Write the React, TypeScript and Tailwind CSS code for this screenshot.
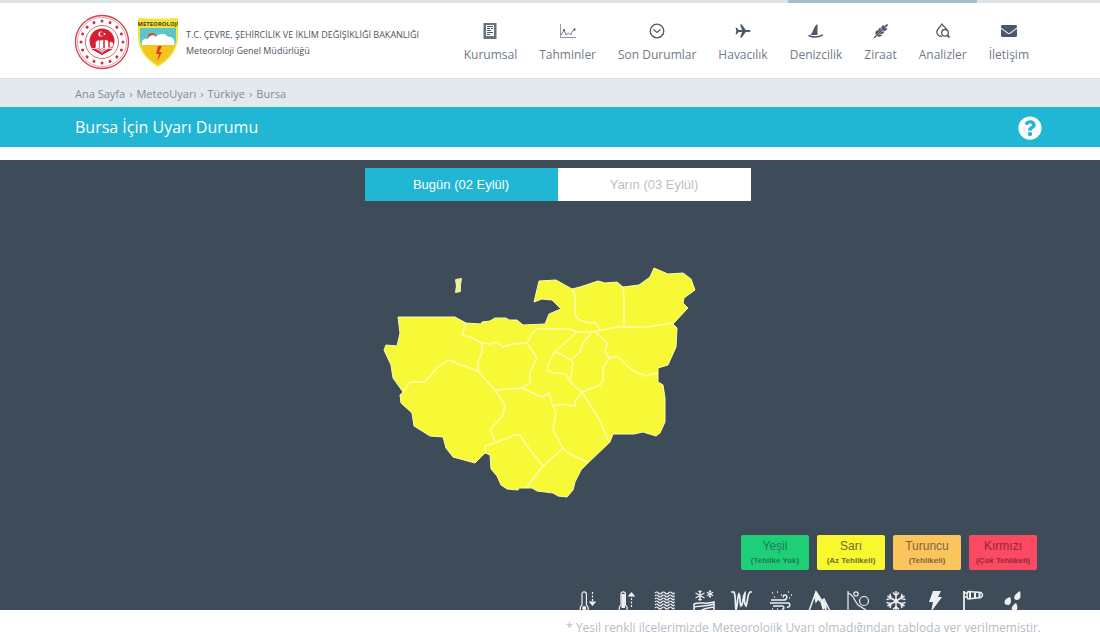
import type { ReactNode } from "react";
import { FaEnvelope, FaQuestionCircle } from "react-icons/fa";

const NAV: { label: string; icon: ReactNode }[] = [
  {
    label: "Kurumsal",
    icon: (
      <svg viewBox="0 0 16 16" className="h-4 w-4">
        <path fill="currentColor" fillRule="evenodd" opacity=".85" d="M1.500 0h13v16h-13zM4 2v11h8V2z" />
        <path fill="none" stroke="currentColor" d="M5 3.500h6M5 5.500h3M9 5.500h2M5 7.500h4M5 9.500h6M5 11.500h3" />
      </svg>
    ),
  },
  {
    label: "Tahminler",
    icon: (
      <svg viewBox="0 0 16 16" className="h-4 w-4" fill="none" stroke="currentColor" strokeWidth="1">
        <path d="M.5 1v13.500H16" opacity=".6" />
        <path d="M1 12l3-5 2 5 2.500-2 2 2 2-4 3-2" opacity=".8" />
        <circle cx="4" cy="7" r=".7" />
        <circle cx="14.500" cy="6.500" r=".7" />
      </svg>
    ),
  },
  {
    label: "Son Durumlar",
    icon: (
      <svg viewBox="0 0 16 16" className="h-4 w-4" fill="none" stroke="currentColor" strokeWidth="1.300">
        <circle cx="8" cy="8" r="6.800" />
        <path d="M4.500 6.500 8 9.500l3.500-3" />
      </svg>
    ),
  },
  {
    label: "Havacılık",
    icon: (
      <svg viewBox="0 0 16 16" className="h-4 w-4" fill="currentColor">
        <path d="M.5 4.800h1.300l1.900 2.300h3.400L5 1.500h1.800l4 5.600H14c1 0 1.700.5 1.700.9s-.7.9-1.700.9h-3.200l-4 5.600H5l2.100-5.600H3.700l-1.900 2.300H.5L1.300 8z" />
      </svg>
    ),
  },
  {
    label: "Denizcilik",
    icon: (
      <svg viewBox="0 0 16 16" className="h-4 w-4" fill="currentColor">
        <path d="M9.500 1v11H2.500C5.500 9 5.500 3.500 9.500 1z" />
        <path d="M.5 12.500c4 1.800 10 1.700 14.500-.7" fill="none" stroke="currentColor" strokeWidth="1.400" />
      </svg>
    ),
  },
  {
    label: "Ziraat",
    icon: (
      <svg viewBox="0 0 16 16" className="h-4 w-4" fill="currentColor">
        <path d="M1 15 12 4" stroke="currentColor" strokeWidth="1.200" />
        <path d="M3 12C1.500 9 3 8 4.500 7 6 9 5.500 10.500 3 12zM5.500 9.500C4.500 7 5.500 5.500 7.500 4.500 8.500 6.500 8 8 5.500 9.500zM8.500 6.500C7.500 4 9 2.500 11 2c.8 2 0 3.500-2.500 4.500zM4 13c2.500 1.500 4 .5 5-1-2-1.500-3.500-1-5 1zM6.500 10.500c2.500 1 4 0 5-1.800-2-1-3.500-.7-5 1.800zM9.500 7.500c2.500 1 4 0 4.800-2-2-.8-3.700-.5-4.800 2zM11.500 4.500c0-2 1-3 3.500-3.500-.3 2.500-1.300 3.500-3.500 3.500z" />
      </svg>
    ),
  },
  {
    label: "Analizler",
    icon: (
      <svg viewBox="0 0 16 16" className="h-4 w-4" fill="none" stroke="currentColor" strokeWidth="1.300">
        <path d="M7 13.300C4 13.500 1.800 11.500 1.800 9 1.800 6 5 4 7 1.200 8.700 3.500 11 5 12 7" />
        <circle cx="10" cy="9.800" r="3.300" />
        <path d="m12.300 12.200 2.200 2.500" strokeWidth="1.800" />
      </svg>
    ),
  },
  { label: "İletişim", icon: <FaEnvelope className="h-4 w-4" /> },
];

const LEVELS = [
  { name: "Yeşil", note: "(Tehlike Yok)", color: "bg-[#1fcf78] text-[#1b7a55]" },
  { name: "Sarı", note: "(Az Tehlikeli)", color: "bg-[#f9f82f] text-[#6d6c2e]" },
  { name: "Turuncu", note: "(Tehlikeli)", color: "bg-[#fcc45c] text-[#7c6640]" },
  { name: "Kırmızı", note: "(Çok Tehlikeli)", color: "bg-[#fb4a61] text-[#93283b]" },
];

const FLAKE = "M0-5V5M-4.500-2.500l9 5M-4.500 2.500l9-5M-1.500-4.500 0-3l1.500-1.500M-1.500 4.500 0 3l1.500 1.500";

const EVENTS: { name: string; icon: ReactNode }[] = [
  {
    name: "Soğuk",
    icon: (
      <>
        <path d="M6 15V4a2.200 2.200 0 0 1 4.400 0v11a4 4 0 1 1-4.400 0z" />
        <circle cx="8.200" cy="18" r="1.500" fill="currentColor" />
        <path d="M16.500 2v11" strokeDasharray="2 1.500" />
        <path d="m14 12 2.500 3 2.500-3z" fill="currentColor" />
      </>
    ),
  },
  {
    name: "Sıcak",
    icon: (
      <>
        <path d="M6 15V4a2.200 2.200 0 0 1 4.400 0v11a4 4 0 1 1-4.400 0z" />
        <path d="M8.200 4v14" strokeWidth="3.500" />
        <path d="M16.500 17V6" strokeDasharray="2 1.500" />
        <path d="m14 6 2.500-3L19 6z" fill="currentColor" />
      </>
    ),
  },
  {
    name: "Sis",
    icon: (
      <>
        {[3, 6, 9, 12, 15, 18].map((y) => (
          <path key={y} d={`M2 ${y}q1.700-2 3.400 0t3.400 0 3.400 0 3.400 0 3.400 0 2.400-.5`} />
        ))}
      </>
    ),
  },
  {
    name: "Zirai Don",
    icon: (
      <>
        <path d={FLAKE} transform="translate(8 5.500)" />
        <path d={FLAKE} transform="translate(18 4) scale(.7)" strokeWidth="1.600" />
        <path d="M2 21v-7c6-3 11 1 20-2v9M2 17c8-2 12 0 20-3M8 21c5-3 9-3 14-4" strokeWidth="1.500" />
      </>
    ),
  },
  {
    name: "Buzlanma ve Don",
    icon: (
      <path
        d="M1 2h3c2 4 1 12 2 18C8 15 7 8 9 4c2 3 0 8 2 12 3-3 1-9 4-13 0 5-2 9 1 13 2-4 1-11 4-14h2"
        strokeWidth="1.700"
      />
    ),
  },
  {
    name: "Toz Taşınımı",
    icon: (
      <>
        <path d="M2 10h13c3 0 4-5 1-5-2 0-2 2-1 2M1 13h18c3 0 2 5-1 4M4 16h9c3 0 2 4 0 3" strokeWidth="1.500" />
        <path d="M3 3h1M8 2h1M12 5h1M19 2h1M5 7h1M20 8h1M22 5h1M3 19h1M8 19h1" strokeWidth="1.500" />
      </>
    ),
  },
  {
    name: "Çığ",
    icon: (
      <>
        <path d="M2 21 9 2l6 9 2-2 6 12" strokeWidth="1.500" />
        <path d="m7.500 7 1.500-5 4 6v3l-2-2-2 3-1-4zM14 12l2-2 3 5v5l-2-3-1 2z" fill="currentColor" />
      </>
    ),
  },
  {
    name: "Kar Erimesi",
    icon: (
      <>
        <path d="M2 1v20M2 3c5 1 6 7 10 12l8 5" />
        <circle cx="10" cy="4" r="2.200" />
        <circle cx="18" cy="11" r="4.500" />
      </>
    ),
  },
  {
    name: "Kar",
    icon: (
      <path
        d="M12 1v20M3.500 6l17 10M3.500 16l17-10M9 2.500l3 3 3-3M9 19.500l3-3 3 3M2.500 9.500l4.500-1-1-4.500M21.500 9.500l-4.500-1 1-4.500M2.500 12.500l4.500 1-1 4.500M21.500 12.500l-4.500 1 1 4.500"
        strokeWidth="1.500"
      />
    ),
  },
  {
    name: "Gök Gürültülü Sağanak",
    icon: <path d="M10 1h8l-3 6h4L8 22l2-10H6z" fill="currentColor" stroke="none" />,
  },
  {
    name: "Rüzgar",
    icon: (
      <>
        <path d="M3 1v20" strokeWidth="1.800" />
        <path d="M3 3h3M3 7h3M7 1.500 20 2.500q3 2.500 0 5L7 9q-2-3.500 0-7.500z" strokeWidth="1.500" />
        <path d="M9 2v7M14 2.500v6M18.500 2.500v5" strokeWidth="2" />
      </>
    ),
  },
  {
    name: "Yağmur",
    icon: (
      <path
        d="M20 1c1 4 1 9-3 9-5 0-3-6 3-9zM10 7c2 4 1 8-2 8-5 0-5-6 2-8zM16 13c2 3 2 8-1 8-5 0-4-5 1-8z"
        fill="currentColor"
        stroke="none"
      />
    ),
  },
];

const PROVINCE =
  "M398 317H455L466 323 481 324 482 322 490 321 495 318H506L509 320 517 320 523 325 545 324 549 314 556 311 561 309 552 300 542 299 534 302 539 281 556 280 572 289 580 287 598 281 605 283 617 282 623 287 639 285 650 277 654 268 668 274 683 273 691 279 695 290 684 298 683 303 688 308 673 324 677 328 676 347 668 365 658 368V382L663 385 665 398V422L660 433 656 436 643 432 634 434 613 434 610 442 588 463 581 470 575 482 573 490 567 497 558 496 553 493 537 491 532 488H519L518 490 507 489 501 485 497 476 491 469 490 455 485 453 475 463 453 457 446 448 443 437 430 436 414 426 412 413 401 403 400 395 403 392 393 378 391 365 384 350 386 345 397 346 400 333Z";

const DISTRICTS = [
  "M466 323 462 335 470 337 482 343 490 344 497 342 503 347 513 344 527 343 532 334 537 329 570 329 577 332H592L617 327H623L647 327 673 323",
  "M572 289 575 295V315L579 320 590 323 595 322 600 330",
  "M623 287 624 298V326",
  "M577 332 555 352 549 362 547 370 553 373 566 374 571 383 582 392",
  "M555 352 563 355 573 362 572 370 570 382",
  "M592 332 583 343 580 352 571 360",
  "M595 332 607 343 605 352 610 358 617 356 632 370 645 376 657 373",
  "M610 358 603 367V380L600 385 582 392 575 402V406L562 404 553 406",
  "M582 392 590 405 598 417 609 442",
  "M495 390 522 388 542 397 549 393 553 406 556 412 553 430 563 448 570 454 587 462",
  "M563 448 543 466 527 487",
  "M543 466 530 450 520 435H515L497 442 485 446 486 453",
  "M495 441 490 430 503 415 505 405 495 390 478 371 448 360 438 367 425 382 410 382 403 392",
  "M478 371V362L482 352V343",
  "M527 343 537 358 530 372V383L522 388",
];

function MinistrySeal() {
  return (
    <svg viewBox="-28 -28 56 56" className="h-14 w-14" role="img" aria-label="T.C. Çevre Bakanlığı">
      <g fill="none" stroke="#d2404f">
        <circle r="26.500" strokeWidth="1.300" />
        <circle r="24.500" strokeWidth=".5" />
        <circle r="16.500" strokeWidth=".8" />
      </g>
      {Array.from({ length: 16 }, (_, i) => (
        <circle key={i} cy="-21" r="1.500" fill="#c93447" transform={`rotate(${i * 22.5})`} />
      ))}
      <circle cy="-1" r="12.500" fill="#d61f32" />
      <circle cx="-1" cy="-8" r="2.600" fill="#fff" />
      <circle cx="0" cy="-8" r="2.100" fill="#d61f32" />
      <circle cx="2.500" cy="-8" r=".9" fill="#fff" />
      <path d="M-13 7C-8 5-3 6 0 10 3 6 8 5 13 7L0 14z" fill="#fff" />
      <path d="M-11 7C-6 6-3 8 0 11 3 8 6 6 11 7L0 13z" fill="#d61f32" />
      <path
        d="M-6 6V0l3-2v8zM-2 6v-7l3-1V7zM3 7v-9l3 1v7zM8 5V0l3 1v3zM-7 6c4-1 6 1 7 3 1-3 5-4 10-3"
        fill="#fff"
        stroke="#fff"
        strokeWidth=".5"
      />
    </svg>
  );
}

function MeteoShield() {
  return (
    <svg viewBox="0 0 40 50" className="h-[50px] w-10" role="img" aria-label="Meteoroloji">
      <path d="M0 1q20 1 40 0v18C40 34 31 43 20 50 9 43 0 34 0 19z" fill="#f4e43a" />
      <path d="M2 11h36v10q0 4-1 7H3q-1-3-1-7z" fill="#5fc4c9" />
      <path d="M3 28h34C34 38 28 43 20 48 12 43 6 38 3 28z" fill="#f5c51f" />
      <circle cx="14" cy="20" r="4" fill="#dc4a2c" />
      <path d="M4 28c-1-5 2-7 6-6 1-4 6-5 8-2 2-4 10-4 12 0 4-1 8 3 6 8z" fill="#fff" />
      <path d="m20 29-2 8h3l-2 8 5-10h-3l3-6z" fill="#d6401f" />
      <text
        x="20"
        y="9"
        textAnchor="middle"
        fontSize="6"
        fontWeight="700"
        fill="#45431f"
        fontFamily="'Open Sans', sans-serif"
      >
        METEOROLOJİ
      </text>
    </svg>
  );
}

export default function App() {
  return (
    <div className="flex h-screen flex-col overflow-hidden bg-white font-['Open_Sans',sans-serif]">
      <div className="h-[3px] shrink-0 bg-[#dde5eb] pl-[788px]">
        <div className="h-full w-[189px] bg-[#a6bdca]" />
      </div>

      <header className="flex h-[75px] shrink-0 items-start justify-between pr-[71px] pl-[74px]">
        <div className="flex items-center pt-[11px]">
          <MinistrySeal />
          <div className="ml-2">
            <MeteoShield />
          </div>
          <div className="ml-2 pt-[2px] text-[9px] leading-4 text-[#4a5460]">
            <p>T.C. ÇEVRE, ŞEHİRCİLİK VE İKLİM DEĞİŞİKLİĞİ BAKANLIĞI</p>
            <p>Meteoroloji Genel Müdürlüğü</p>
          </div>
        </div>
        <nav className="flex gap-[22px] pt-5">
          {NAV.map((item) => (
            <a key={item.label} href="#" className="flex flex-col items-center gap-2 text-xs text-[#707a87]">
              <span className="text-[#4d596b]">{item.icon}</span>
              {item.label}
            </a>
          ))}
        </nav>
      </header>

      <div className="flex h-[29px] shrink-0 items-center gap-1 border-t border-[#d9e1e7] bg-[#e3eaee] pt-[3px] pl-[75px] text-[11px] text-[#7f8b97]">
        <a href="#">Ana Sayfa</a>
        <span>›</span>
        <a href="#">MeteoUyarı</a>
        <span>›</span>
        <a href="#">Türkiye</a>
        <span>›</span>
        <span>Bursa</span>
      </div>

      <div className="flex h-10 shrink-0 items-center justify-between bg-[#20b6d4] pr-[58px] pl-[75px] text-white">
        <h1 className="text-base">Bursa İçin Uyarı Durumu</h1>
        <button type="button" aria-label="Yardım" className="pt-[2px]">
          <FaQuestionCircle className="h-6 w-6" />
        </button>
      </div>

      <main className="mt-[13px] shrink-0 bg-[#3e4b58] pt-2 pr-[60px] pl-[75px] font-['Liberation_Sans',sans-serif]">
        <div className="mx-auto flex h-[33px] w-[386px] text-[13px]">
          <button type="button" className="flex-1 bg-[#20b6d4] text-white">
            Bugün (02 Eylül)
          </button>
          <button type="button" className="flex-1 bg-white text-[#b9c0c6]">
            Yarın (03 Eylül)
          </button>
        </div>

        <svg
          viewBox="378 260 360 240"
          className="mx-auto mt-[59px] h-[240px] w-[360px]"
          role="img"
          aria-label="Bursa"
          strokeLinejoin="round"
          stroke="#fbfcae"
        >
          <path d={PROVINCE} fill="#f7f936" strokeWidth="1" />
          <path d="M456 280 461 279 460 284V291L456 292 457 286Z" fill="#eff09a" stroke="#eff09a" strokeWidth="2" />
          {DISTRICTS.map((d) => (
            <path key={d} d={d} fill="none" strokeWidth="1.500" />
          ))}
        </svg>

        <div className="mt-[35px] flex justify-end gap-2 pr-[3px]">
          {LEVELS.map((level) => (
            <div key={level.name} className={`h-[35px] w-[68px] rounded-xs pt-[3px] text-center ${level.color}`}>
              <p className="text-xs leading-4">{level.name}</p>
              <p className="pt-px text-[8px] leading-3 font-bold">{level.note}</p>
            </div>
          ))}
        </div>

        <div className="mt-5 ml-auto flex h-5 w-[464px] items-start justify-between overflow-hidden pr-4 text-[#eef1f3]">
          {EVENTS.map((event) => (
            <svg
              key={event.name}
              viewBox="0 0 24 24"
              className="h-6 w-6 shrink-0"
              fill="none"
              stroke="currentColor"
              strokeWidth="1.200"
              role="img"
              aria-label={event.name}
            >
              {event.icon}
            </svg>
          ))}
        </div>
      </main>

      <p className="mt-[10px] pr-[59px] text-right text-xs whitespace-nowrap text-[#b8bcc0]">
        * Yeşil renkli ilçelerimizde Meteorolojik Uyarı olmadığından tabloda yer verilmemiştir.
      </p>
    </div>
  );
}
